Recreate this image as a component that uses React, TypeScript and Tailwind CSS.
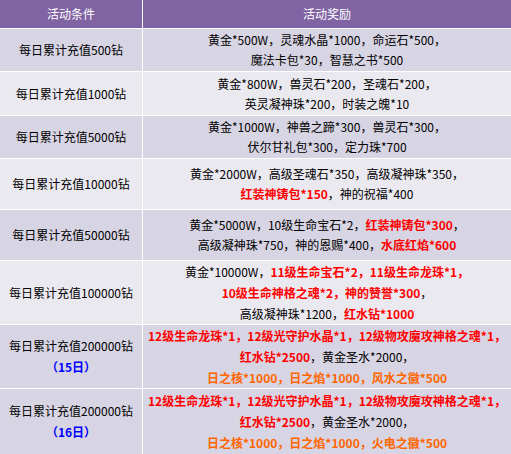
import React from "react";

type Seg = { t: string; c?: "r" | "o" };
type Row = { left: string; sub?: string; h: string; bg: string; lines: Seg[][] };

const D = "bg-[#d7d4e3]";
const L = "bg-[#ebe9f0]";

const rows: Row[] = [
  {
    left: "每日累计充值500钻",
    h: "h-[42px]",
    bg: D,
    lines: [[{ t: "黄金*500W，灵魂水晶*1000，命运石*500，" }], [{ t: "魔法卡包*30，智慧之书*500" }]],
  },
  {
    left: "每日累计充值1000钻",
    h: "h-[43px]",
    bg: L,
    lines: [[{ t: "黄金*800W，兽灵石*200，圣魂石*200，" }], [{ t: "英灵凝神珠*200，时装之魄*10" }]],
  },
  {
    left: "每日累计充值5000钻",
    h: "h-[42px]",
    bg: D,
    lines: [[{ t: "黄金*1000W，神兽之蹄*300，兽灵石*300，" }], [{ t: "伏尔甘礼包*300，定力珠*700" }]],
  },
  {
    left: "每日累计充值10000钻",
    h: "h-[50px]",
    bg: L,
    lines: [
      [{ t: "黄金*2000W，高级圣魂石*350，高级凝神珠*350，" }],
      [{ t: "红装神铸包*150", c: "r" }, { t: "，神的祝福*400" }],
    ],
  },
  {
    left: "每日累计充值50000钻",
    h: "h-[50px]",
    bg: D,
    lines: [
      [{ t: "黄金*5000W，10级生命宝石*2，" }, { t: "红装神铸包*300", c: "r" }, { t: "，" }],
      [{ t: "高级凝神珠*750，神的恩赐*400，" }, { t: "水底红焰*600", c: "r" }],
    ],
  },
  {
    left: "每日累计充值100000钻",
    h: "h-[63px]",
    bg: L,
    lines: [
      [{ t: "黄金*10000W，" }, { t: "11级生命宝石*2，11级生命龙珠*1，", c: "r" }],
      [{ t: "10级生命神格之魂*2，神的赞誉*300", c: "r" }, { t: "，" }],
      [{ t: "高级凝神珠*1200，" }, { t: "红水钻*1000", c: "r" }],
    ],
  },
  {
    left: "每日累计充值200000钻",
    sub: "（15日）",
    h: "h-[63px]",
    bg: D,
    lines: [
      [{ t: "12级生命龙珠*1，12级光守护水晶*1，12级物攻魔攻神格之魂*1，", c: "r" }],
      [{ t: "红水钻*2500", c: "r" }, { t: "，黄金圣水*2000，" }],
      [{ t: "日之核*1000，日之焰*1000，风水之徽*500", c: "o" }],
    ],
  },
  {
    left: "每日累计充值200000钻",
    sub: "（16日）",
    h: "h-[65px]",
    bg: D,
    lines: [
      [{ t: "12级生命龙珠*1，12级光守护水晶*1，12级物攻魔攻神格之魂*1，", c: "r" }],
      [{ t: "红水钻*2500", c: "r" }, { t: "，黄金圣水*2000，" }],
      [{ t: "日之核*1000，日之焰*1000，火电之徽*500", c: "o" }],
    ],
  },
];

function SegSpan({ s }: { s: Seg }) {
  if (s.c === "r") return <span className="font-bold text-[#ff0000]">{s.t}</span>;
  if (s.c === "o") return <span className="font-bold text-[#ff6600]">{s.t}</span>;
  return <span>{s.t}</span>;
}

export default function App() {
  return (
    <div
      className="w-[511px] h-[454px] overflow-hidden bg-white text-[12px] leading-[20px] text-black"
      style={{ fontFamily: '"Noto Sans CJK SC", "Liberation Sans", sans-serif' }}
    >
      <div className="grid grid-cols-[142px_368px] gap-px">
        <div className="h-[28px] bg-[#7f63a3] text-white flex items-center justify-center">活动条件</div>
        <div className="h-[28px] bg-[#7f63a3] text-white flex items-center justify-center">活动奖励</div>
        {rows.map((r, i) => (
          <React.Fragment key={i}>
            <div className={`${r.h} ${r.bg} flex flex-col items-center justify-center`}>
              <div>{r.left}</div>
              {r.sub && <div className="font-bold text-[#0000ff] mt-px">{r.sub}</div>}
            </div>
            <div className={`${r.h} ${r.bg} flex flex-col items-center justify-center whitespace-nowrap`}>
              {r.lines.map((ln, j) => (
                <div key={j} className={r.lines.length === 3 ? "leading-[21px]" : ""}>
                  {ln.map((s, k) => (
                    <SegSpan key={k} s={s} />
                  ))}
                </div>
              ))}
            </div>
          </React.Fragment>
        ))}
      </div>
    </div>
  );
}
